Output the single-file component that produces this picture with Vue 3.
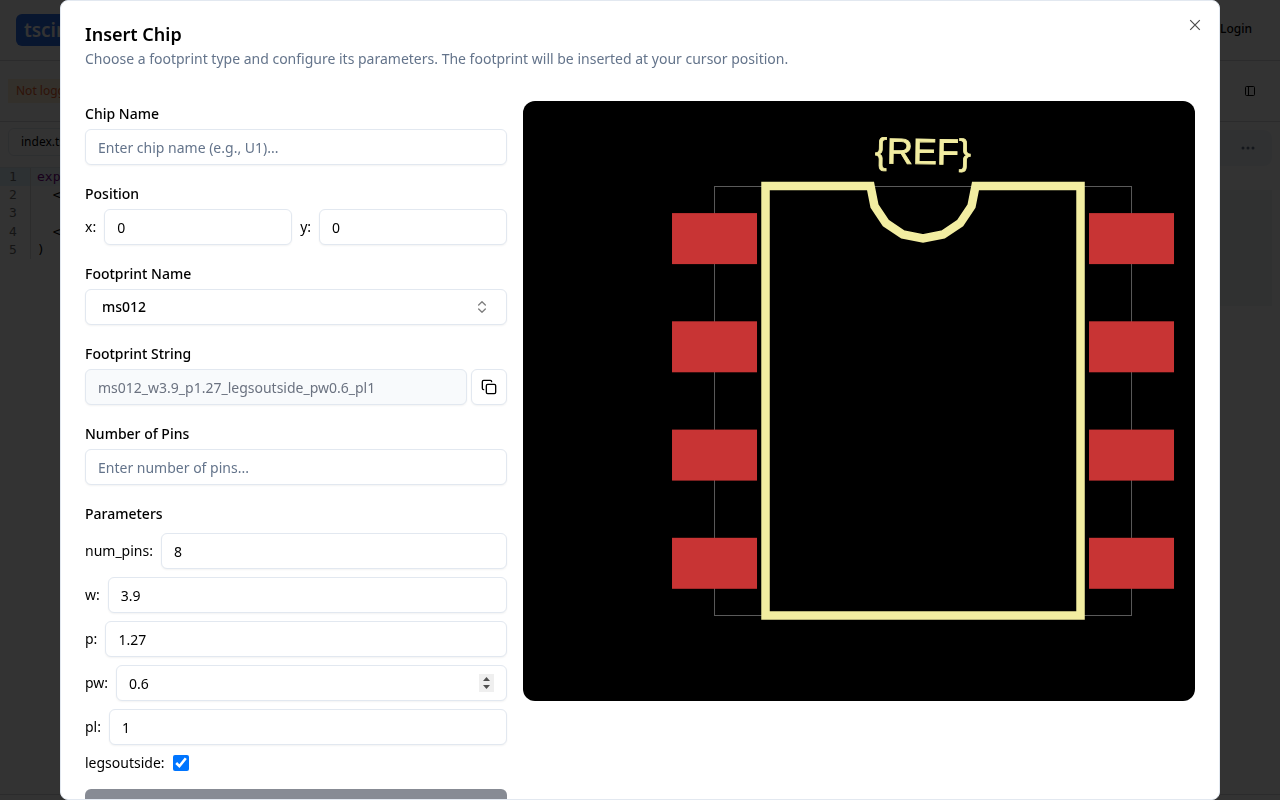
<script setup>
import { reactive } from 'vue'

const form = reactive({
  chipName: '',
  x: 0,
  y: 0,
  footprint: 'ms012',
  footprintString: 'ms012_w3.9_p1.27_legsoutside_pw0.6_pl1',
  pins: '',
  legsoutside: true,
})

const params = reactive([
  { name: 'num_pins', value: 8 },
  { name: 'w', value: 3.9 },
  { name: 'p', value: 1.27 },
  { name: 'pw', value: 0.6, active: true },
  { name: 'pl', value: 1 },
])

const padRows = [112.1, 220.3, 328.6, 436.8]
</script>

<template>
  <div class="page">
    <header class="topbar">
      <a class="logo" href="#">tscircuit</a>
      <a class="login" href="#">Login</a>
    </header>
    <div class="toolbar">
      <span class="notice">Not logged in</span>
      <button class="plain" aria-label="Toggle panel">
        <svg width="12" height="12" viewBox="0 0 12 12" fill="none" stroke="currentColor">
          <rect x="1.5" y="1.5" width="9" height="9" rx="1" />
          <path d="M4.5 1.5v9" />
        </svg>
      </button>
    </div>
    <main class="workspace">
      <section class="editor">
        <div class="tabs"><button class="tab">index.tsx</button></div>
        <div class="code">
          <div class="gutter"><span class="current">1</span><span>2</span><span>3</span><span>4</span><span>5</span></div>
          <pre class="lines"><span class="line current"><b>export</b> default () =&gt; (</span><span class="line">  &lt;board&gt;</span><span class="line"> </span><span class="line">  &lt;/board&gt;</span><span class="line">)</span></pre>
        </div>
      </section>
      <section class="preview">
        <div class="preview-bar"><button class="plain" aria-label="More">
          <svg width="14" height="4" viewBox="0 0 14 4" fill="currentColor">
            <circle cx="2" cy="2" r="1.5" /><circle cx="7" cy="2" r="1.5" /><circle cx="12" cy="2" r="1.5" />
          </svg>
        </button></div>
        <div class="preview-body"></div>
      </section>
    </main>
    <footer class="statusbar"></footer>
  </div>

  <div class="overlay">
    <div class="dialog" role="dialog" aria-modal="true" aria-labelledby="dialog-title">
      <button class="close" aria-label="Close">
        <svg width="16" height="16" viewBox="0 0 16 16" fill="none" stroke="currentColor" stroke-width="1.2">
          <path d="M3.2 3.2l9.6 9.6M12.8 3.2l-9.6 9.6" />
        </svg>
      </button>
      <div class="heading">
        <h2 id="dialog-title">Insert Chip</h2>
        <p>Choose a footprint type and configure its parameters. The footprint will be inserted at your cursor position.</p>
      </div>

      <div class="content">
        <form class="form" @submit.prevent>
          <div class="field">
            <label class="title" for="chip-name">Chip Name</label>
            <input id="chip-name" v-model="form.chipName" type="text" placeholder="Enter chip name (e.g., U1)..." />
          </div>
          <div class="field">
            <span class="title">Position</span>
            <div class="row">
              <label for="pos-x">x:</label>
              <input id="pos-x" v-model="form.x" type="number" />
              <label for="pos-y">y:</label>
              <input id="pos-y" v-model="form.y" type="number" />
            </div>
          </div>
          <div class="field">
            <label class="title" for="footprint">Footprint Name</label>
            <div class="picker">
              <select id="footprint" v-model="form.footprint">
                <option>ms012</option>
              </select>
              <svg class="chevrons" width="16" height="16" viewBox="0 0 24 24" fill="none" stroke="currentColor" stroke-width="2" stroke-linecap="round" stroke-linejoin="round">
                <path d="m7 15 5 5 5-5" /><path d="m7 9 5-5 5 5" />
              </svg>
            </div>
          </div>
          <div class="field">
            <label class="title" for="footprint-string">Footprint String</label>
            <div class="row tight">
              <input id="footprint-string" class="readonly" type="text" readonly :value="form.footprintString" />
              <button class="copy" type="button" aria-label="Copy">
                <svg width="16" height="16" viewBox="0 0 24 24" fill="none" stroke="currentColor" stroke-width="2" stroke-linecap="round" stroke-linejoin="round">
                  <rect width="14" height="14" x="8" y="8" rx="2" />
                  <path d="M4 16c-1.1 0-2-.9-2-2V4c0-1.1.9-2 2-2h10c1.1 0 2 .9 2 2" />
                </svg>
              </button>
            </div>
          </div>
          <div class="field">
            <label class="title" for="pin-count">Number of Pins</label>
            <input id="pin-count" v-model="form.pins" type="number" placeholder="Enter number of pins..." />
          </div>
          <div class="params">
            <span class="title">Parameters</span>
            <div v-for="p in params" :key="p.name" class="row">
              <label :for="'param-' + p.name">{{ p.name }}:</label>
              <input :id="'param-' + p.name" v-model="p.value" type="number" step="any" :class="{ active: p.active }" />
            </div>
            <div class="row">
              <label for="legsoutside">legsoutside:</label>
              <input id="legsoutside" v-model="form.legsoutside" type="checkbox" />
            </div>
          </div>
          <button class="submit" type="submit" disabled aria-label="Insert Chip"></button>
        </form>

        <div class="board">
          <svg viewBox="0 0 672 600" role="img" aria-label="Footprint preview">
            <rect x="191.5" y="85.5" width="417" height="429" fill="none" stroke="#5a5a5a" />
            <g fill="#c83434">
              <template v-for="y in padRows" :key="y">
                <rect x="149" :y="y" width="85" height="51" />
                <rect x="566" :y="y" width="85" height="51" />
              </template>
            </g>
            <path
              d="M347.5 85H242.5V514.5H557.5V85H452.5L448.5 105.1L437.1 122.1L420.1 133.5L400 137.5L379.9 133.5L362.9 122.1L351.5 105.1L347.5 85H242.5V100"
              fill="none" stroke="#f2eda1" stroke-width="8.5"
            />
            <text x="400" y="63" transform="rotate(.8 400 52)" text-anchor="middle" font-size="36" fill="#f2eda1" stroke="#f2eda1" stroke-width=".8">{REF}</text>
          </svg>
        </div>
      </div>
    </div>
  </div>
</template>

<style>
body {
  margin: 0;
  overflow: hidden;
}
</style>

<style scoped>
.page,
.overlay {
  font-family: "Noto Sans", sans-serif;
  font-size: 14px;
  line-height: 20px;
  color: #000;
}
.page *,
.overlay * {
  box-sizing: border-box;
}
.page {
  display: flex;
  flex-direction: column;
  height: 100vh;
  background: #fff;
}
button,
input,
select {
  font: inherit;
  color: inherit;
  margin: 0;
}
.plain {
  display: flex;
  padding: 0;
  border: 0;
  background: none;
}
.topbar {
  display: flex;
  align-items: center;
  justify-content: space-between;
  height: 61px;
  padding: 0 28px 0 16px;
  border-bottom: 1px solid #d5d7db;
}
.logo {
  padding: 4px 8px;
  border-radius: 6px;
  background: #2b6de8;
  color: #fff;
  font-size: 19px;
  font-weight: 600;
  line-height: 24px;
  text-decoration: none;
}
.login {
  padding-bottom: 2px;
  color: inherit;
  font-size: 12px;
  font-weight: 500;
  text-decoration: none;
}
.toolbar {
  display: flex;
  align-items: center;
  justify-content: space-between;
  height: 61px;
  padding: 0 24px 0 8px;
  border-bottom: 1px solid #d5d7db;
}
.notice {
  padding: 2px 8px;
  background: #ffedd5;
  color: #e8602c;
  font-size: 12px;
}
.workspace {
  display: flex;
  flex: 1;
}
.editor,
.preview {
  flex: 1;
}
.tabs {
  height: 46px;
  padding: 6px 8px;
  border-bottom: 1px solid #e2e8f0;
}
.tab {
  height: 28px;
  padding: 0 12px;
  border: 1px solid #e2e8f0;
  border-radius: 6px;
  background: #fff;
  font-size: 12px;
}
.code {
  display: flex;
  font-family: "DejaVu Sans Mono", monospace;
  font-size: 13px;
  line-height: 1.4;
}
.gutter {
  display: flex;
  flex-direction: column;
  width: 31px;
  border-right: 1px solid #ddd;
  color: #6c6c6c;
}
.gutter span {
  padding-left: 9px;
}
.gutter .current {
  background: #e2f2ff;
}
.lines {
  display: flex;
  flex: 1;
  flex-direction: column;
  margin: 0;
  font: inherit;
}
.line {
  padding-left: 6px;
}
.lines .current {
  background: #eef7ff;
}
.lines b {
  color: #770088;
  font-weight: 400;
}
.preview {
  display: flex;
  flex-direction: column;
  gap: 24px;
  padding: 8px;
}
.preview-bar {
  display: flex;
  align-items: center;
  justify-content: flex-end;
  height: 36px;
  padding: 0 17px;
  border-radius: 8px;
  background: #f1f5f9;
  color: #64748b;
}
.preview-body {
  height: 116px;
  background: #f0f6f3;
}
.statusbar {
  height: 6px;
  border-top: 1px solid #d5d7db;
}
.overlay {
  position: fixed;
  inset: 0;
  display: flex;
  justify-content: center;
  padding: 0 60px;
  background: rgba(0, 0, 0, 0.8);
  box-sizing: border-box;
}
.dialog {
  position: relative;
  width: 100%;
  max-height: 100vh;
  padding: 24px;
  overflow: hidden;
  border: 1px solid #e2e8f0;
  border-radius: 8px;
  background: #fff;
}
.close {
  position: absolute;
  top: 16px;
  right: 16px;
  display: flex;
  padding: 0;
  border: 0;
  background: none;
  opacity: 0.7;
}
.heading h2 {
  margin: 0 0 6px;
  font-size: 18px;
  font-weight: 600;
  line-height: 18px;
}
.heading p {
  margin: 0;
  color: #64748b;
}
.content {
  display: grid;
  grid-template-columns: 27fr 43fr;
  gap: 16px;
  align-items: start;
  margin-top: 32px;
}
.form {
  display: flex;
  flex-direction: column;
  gap: 16px;
  min-width: 0;
}
.field {
  display: flex;
  flex-direction: column;
  gap: 4px;
}
.params {
  display: flex;
  flex-direction: column;
  gap: 8px;
}
.title {
  padding-top: 2px;
  font-weight: 500;
  line-height: 22px;
}
.row {
  display: flex;
  align-items: center;
  gap: 8px;
}
.tight {
  gap: 4px;
}
input:not([type="checkbox"]),
select,
.copy {
  height: 36px;
  border: 1px solid #e2e8f0;
  border-radius: 6px;
  background: #fff;
  box-shadow: 0 1px 2px rgba(0, 0, 0, 0.05);
}
input:not([type="checkbox"]) {
  flex: 1 0 auto;
  min-width: 0;
  padding: 4px 12px;
}
.row input:not([type="checkbox"]) {
  flex: 1 1 0;
  width: 0;
}
input::placeholder {
  color: #64748b;
}
.active::-webkit-inner-spin-button {
  width: 15px;
  height: 18px;
  margin: 0;
  appearance: none;
  opacity: 1;
  background: #efefef url("data:image/svg+xml,%3Csvg xmlns='http://www.w3.org/2000/svg' width='15' height='18'%3E%3Cpath fill='%23505050' d='M4 7h7L7.5 3zM4 11h7l-3.5 4z'/%3E%3C/svg%3E") no-repeat;
}
input.readonly:not([type="checkbox"]) {
  background: #f8fafc;
  color: #6b7280;
}
.picker {
  position: relative;
  display: flex;
}
select {
  width: 100%;
  padding: 0 16px;
  appearance: none;
  font-weight: 500;
}
.chevrons {
  position: absolute;
  top: 10px;
  right: 17px;
  opacity: 0.5;
  pointer-events: none;
}
.copy {
  display: flex;
  align-items: center;
  justify-content: center;
  width: 36px;
  padding: 0;
}
input[type="checkbox"] {
  width: 16px;
  height: 16px;
}
.submit {
  height: 36px;
  border: 0;
  border-radius: 6px;
  background: #0f172a;
  opacity: 0.5;
}
.board {
  display: flex;
  height: 600px;
  overflow: hidden;
  border-radius: 12px;
  background: #000;
}
.board svg {
  width: 100%;
  height: 100%;
}
.board text {
  font-family: "Liberation Sans", Arial, sans-serif;
}
</style>
